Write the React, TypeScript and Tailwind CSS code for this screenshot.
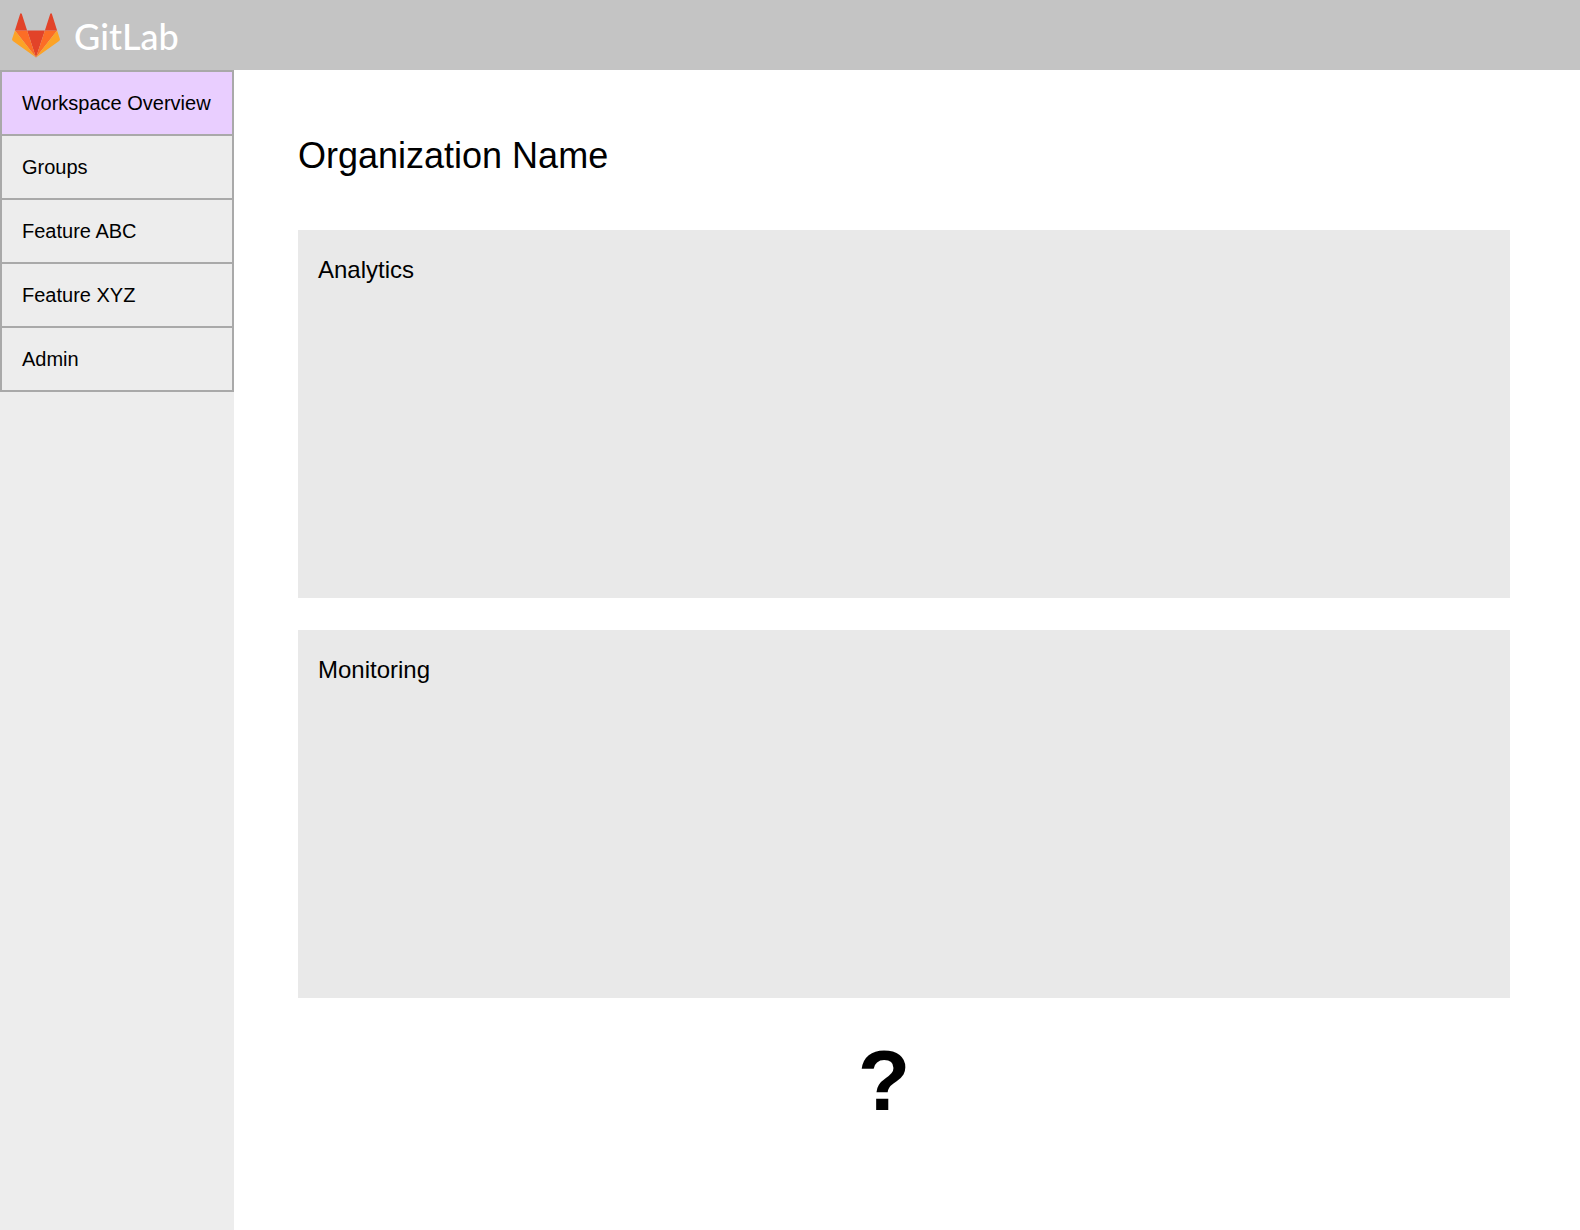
const navItems = ["Workspace Overview", "Groups", "Feature ABC", "Feature XYZ", "Admin"];
const panels = ["Analytics", "Monitoring"];

function Tanuki() {
  return (
    <svg viewBox="0 0 48 45" className="h-[45px] w-12 shrink-0" aria-hidden="true">
      <path d="M24 44.5 32.9 17.6H15.1Z" fill="#e24329" />
      <path d="M24 44.5 15.1 17.6H2.9Z" fill="#fc6d26" />
      <path d="M2.9 17.6.2 25.8c-.3.8 0 1.6.7 2.1L24 44.5Z" fill="#fca326" />
      <path d="M2.9 17.6h12.2L9.8 1c-.3-.9-1.5-.9-1.7 0Z" fill="#e24329" />
      <path d="M24 44.5 32.9 17.6h12.2Z" fill="#fc6d26" />
      <path d="M45.1 17.6l2.7 8.2c.3.8 0 1.6-.7 2.1L24 44.5Z" fill="#fca326" />
      <path d="M45.1 17.6H32.9L38.2 1c.3-.9 1.5-.9 1.7 0Z" fill="#e24329" />
    </svg>
  );
}

export default function App() {
  return (
    <div className="flex min-h-screen flex-col bg-white font-['Liberation_Sans',Arial,sans-serif] text-black">
      <header className="flex h-[70px] items-center bg-[#c4c4c4] px-3">
        <a href="#home" className="flex items-center gap-3.5">
          <Tanuki />
          <span className="pt-0.5 font-[Lato,sans-serif] text-4xl leading-11 font-medium text-white">GitLab</span>
        </a>
      </header>
      <div className="flex grow">
        <nav aria-label="Workspace" className="w-[234px] shrink-0 bg-[#ededed]">
          <ul className="divide-y-2 divide-[#a9a9a9] border-2 border-[#a9a9a9]">
            {navItems.map((item, i) => (
              <li key={item}>
                <a
                  href={"#" + item.toLowerCase().replace(" ", "-")}
                  aria-current={i === 0 ? "page" : undefined}
                  className="flex h-[62px] items-center whitespace-nowrap px-5 text-xl aria-[current=page]:bg-[#e9ceff]"
                >
                  {item}
                </a>
              </li>
            ))}
          </ul>
        </nav>
        <main className="min-w-0 grow pt-16 pr-[70px] pl-16">
          <h1 className="text-4xl leading-11">Organization Name</h1>
          <div className="mt-[52px] flex flex-col gap-8">
            {panels.map((title) => (
              <section key={title} className="min-h-[368px] bg-[#e9e9e9] px-5 py-6">
                <h2 className="text-2xl">{title}</h2>
              </section>
            ))}
          </div>
          <p className="mt-[34px] pr-10 text-center text-[86px] leading-24 font-bold">?</p>
        </main>
      </div>
    </div>
  );
}
